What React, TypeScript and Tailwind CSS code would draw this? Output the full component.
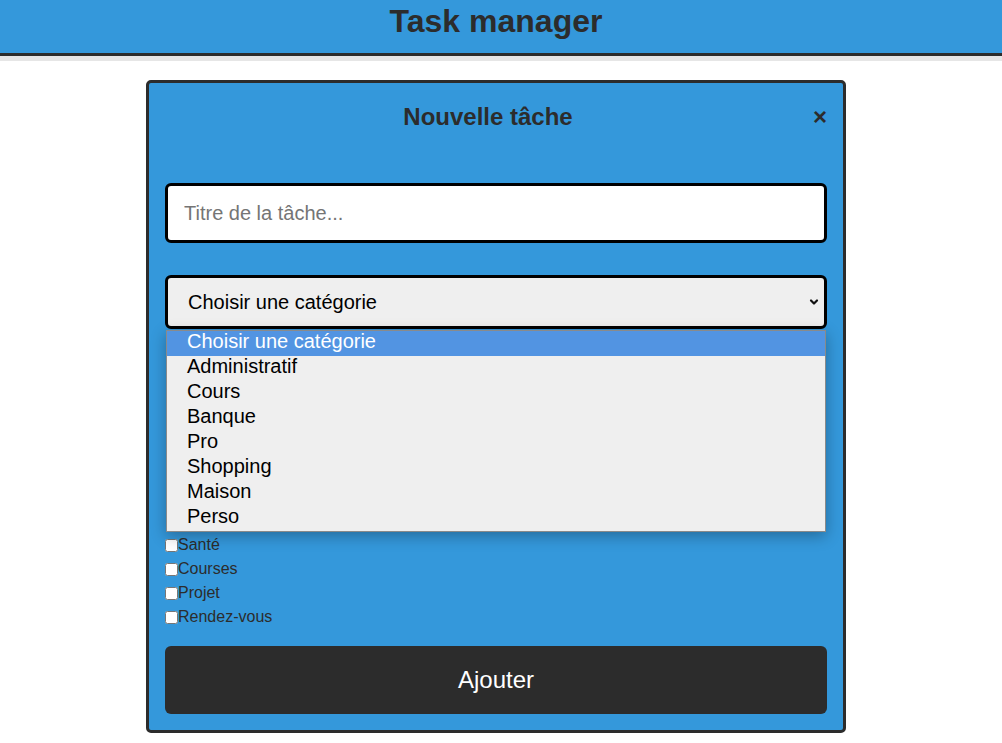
import React from 'react'

const options = ['Choisir une catégorie', 'Administratif', 'Cours', 'Banque', 'Pro', 'Shopping', 'Maison', 'Perso']
const tags = ['Santé', 'Courses', 'Projet', 'Rendez-vous']

export default function App() {
    return (
        <div className="min-h-screen bg-white font-['Liberation_Sans',Arial,sans-serif] text-[#2c2c2c]">
            {/* header */}
            <header className="h-[56px] bg-[#3498db] border-b-[3px] border-[#2c2c2c] shadow-[0_5px_0_#e6e6e6] pr-[10px]">
                <h1 className="text-center text-[32px] font-bold leading-[43px]">Task manager</h1>
            </header>

            {/* modal */}
            <div className="pr-[10px]">
                <div className="mx-auto mt-[24px] w-[700px] rounded-[5px] border-[3px] border-[#2c2c2c] bg-[#3498db] px-4 pt-5 pb-4">
                    <div className="flex items-center">
                        <h2 className="flex-1 text-center text-2xl font-bold leading-[28px]">Nouvelle tâche</h2>
                        <button className="w-[16px] text-right text-[24px] font-bold leading-[28px] text-[#2c2c2c]">×</button>
                    </div>

                    <input
                        type="text"
                        placeholder="Titre de la tâche..."
                        className="mt-[52px] block h-[60px] w-full rounded-md border-[3px] border-black bg-white px-4 text-xl text-black outline-none placeholder:text-[#757575]"
                    />

                    <div className="relative mt-[32px]">
                        <div className="flex h-[54px] w-full items-center justify-between rounded-md border-[3px] border-black bg-[#efefef] pl-5 pr-[5px] text-xl text-black">
                            <span>Choisir une catégorie</span>
                            <svg className="h-[10px] w-[10px]" viewBox="0 0 10 10" fill="none" stroke="#111" strokeWidth={2.2} strokeLinecap="round" strokeLinejoin="round">
                                <path d="M2 3.5l3 3 3-3" />
                            </svg>
                        </div>

                        {/* open list */}
                        <ul className="absolute left-px top-[55px] z-10 w-[660px] border border-[#8a8a8a] bg-[#efefef] text-xl text-black shadow-[0_4px_14px_rgba(0,0,0,0.3)]">
                            {options.map((o, i) => (
                                <li key={o} className={i === 0 ? 'h-[25px] bg-[#5294e2] pl-5 leading-[21px] text-white' : 'h-[25px] pl-5 leading-[21px]'}>
                                    {o}
                                </li>
                            ))}
                        </ul>
                    </div>

                    <div className="mt-[204px] flex flex-col">
                        {tags.map((t) => (
                            <label key={t} className="flex h-[24px] items-center text-base text-[#2c2c2c]">
                                <input type="checkbox" className="m-0 h-[13px] w-[13px]" />
                                <span>{t}</span>
                            </label>
                        ))}
                    </div>

                    <button className="mt-[17px] block h-[68px] w-full rounded-md bg-[#2c2c2c] text-2xl text-white">Ajouter</button>
                </div>
            </div>
        </div>
    )
}
